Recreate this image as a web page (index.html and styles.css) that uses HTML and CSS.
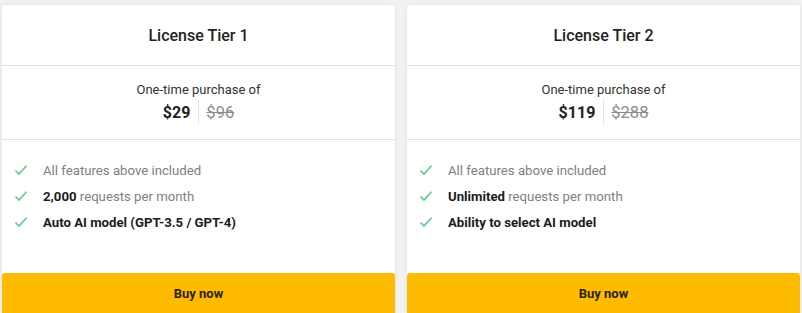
FILE: index.html
```html
<!DOCTYPE html>
<html>
<head>
<meta charset="utf-8">
<link rel="stylesheet" href="styles.css">
</head>
<body>
<div class="tiers">
  <div class="card">
    <div class="card-head">License Tier 1</div>
    <div class="card-price">
      <div class="once">One-time purchase of</div>
      <div class="amounts"><span class="now">$29</span><span class="sep"></span><span class="was">$96</span></div>
    </div>
    <ul class="features">
      <li><svg class="check" viewBox="0 0 14 12"><path d="M1.5 6.5 L5 10 L12.5 1.8"/></svg><span>All features above included</span></li>
      <li><svg class="check" viewBox="0 0 14 12"><path d="M1.5 6.5 L5 10 L12.5 1.8"/></svg><span><b>2,000</b> requests per month</span></li>
      <li><svg class="check" viewBox="0 0 14 12"><path d="M1.5 6.5 L5 10 L12.5 1.8"/></svg><span><b>Auto AI model (GPT-3.5 / GPT-4)</b></span></li>
    </ul>
    <button class="buy">Buy now</button>
  </div>
  <div class="card">
    <div class="card-head">License Tier 2</div>
    <div class="card-price">
      <div class="once">One-time purchase of</div>
      <div class="amounts"><span class="now">$119</span><span class="sep"></span><span class="was">$288</span></div>
    </div>
    <ul class="features">
      <li><svg class="check" viewBox="0 0 14 12"><path d="M1.5 6.5 L5 10 L12.5 1.8"/></svg><span>All features above included</span></li>
      <li><svg class="check" viewBox="0 0 14 12"><path d="M1.5 6.5 L5 10 L12.5 1.8"/></svg><span><b>Unlimited</b> requests per month</span></li>
      <li><svg class="check" viewBox="0 0 14 12"><path d="M1.5 6.5 L5 10 L12.5 1.8"/></svg><span><b>Ability to select AI model</b></span></li>
    </ul>
    <button class="buy">Buy now</button>
  </div>
</div>
</body>
</html>
```
FILE: styles.css
```css
html, body {
  margin: 0;
  padding: 0;
  background: #f2f2f2;
  font-family: Roboto, "Liberation Sans", sans-serif;
  overflow: hidden;
}
.tiers {
  display: grid;
  grid-template-columns: 1fr 1fr;
  gap: 12px;
  padding: 5px 2px 0 2px;
}
.card {
  background: #fff;
  border-radius: 3px;
  box-shadow: 0 0 4px rgba(0,0,0,0.08);
  display: flex;
  flex-direction: column;
}
.card-head {
  height: 60px;
  display: flex;
  align-items: center;
  justify-content: center;
  font-size: 16px;
  font-weight: 500;
  color: #222;
  border-bottom: 1px solid #e3e3e3;
}
.card-price {
  height: 74px;
  border-bottom: 1px solid #e3e3e3;
  display: flex;
  flex-direction: column;
  align-items: center;
  padding-top: 16px;
  box-sizing: border-box;
}
.once {
  font-size: 13px;
  color: #333;
  line-height: 16px;
}
.amounts {
  display: flex;
  align-items: center;
  margin-top: 2px;
  height: 24px;
}
.now {
  font-size: 16px;
  font-weight: 700;
  color: #222;
}
.sep {
  width: 1px;
  height: 24px;
  background: #e3e3e3;
  margin: 0 7px 0 8px;
}
.was {
  font-size: 16.5px;
  color: #8c8c8c;
  text-decoration: line-through;
}
.features {
  list-style: none;
  margin: 0;
  padding: 17px 0 38px 12px;
}
.features li {
  display: flex;
  align-items: center;
  height: 26px;
  font-size: 13.2px;
  color: #808080;
}
.features li b {
  color: #1c1c1c;
  font-weight: 700;
}
.check {
  width: 14px;
  height: 12px;
  margin-right: 15px;
  flex: none;
}
.check path {
  fill: none;
  stroke: #5ccf83;
  stroke-width: 1.6;
}
.buy {
  border: none;
  background: #ffbb00;
  border-radius: 3px 3px 0 0;
  height: 42px;
  font-family: Roboto, "Liberation Sans", sans-serif;
  font-size: 13px;
  font-weight: 700;
  color: #2a2200;
  padding: 0;
  padding-bottom: 2px;
  cursor: pointer;
}
```
